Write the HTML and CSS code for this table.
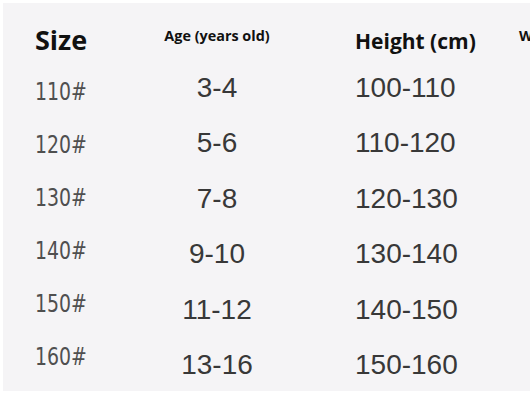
FILE: index.html
```html
<!DOCTYPE html>
<html lang="en">
<head>
    <meta charset="UTF-8">
    <meta name="viewport" content="width=device-width, initial-scale=1.0">
    <title>Size Chart</title>
    <link rel="stylesheet" href="styles.css">
</head>
<body>

<div class="sheet">
    <div class="col col-size">
        <div class="head head-size">Size</div>
        <ul class="list list-size">
            <li><span>110#</span></li>
            <li><span>120#</span></li>
            <li><span>130#</span></li>
            <li><span>140#</span></li>
            <li><span>150#</span></li>
            <li><span>160#</span></li>
        </ul>
    </div>
    <div class="col col-age">
        <div class="head head-small">Age (years old)</div>
        <ul class="list list-num">
            <li>3-4</li>
            <li>5-6</li>
            <li>7-8</li>
            <li>9-10</li>
            <li>11-12</li>
            <li>13-16</li>
        </ul>
    </div>
    <div class="col col-height">
        <div class="head head-height">Height (cm)</div>
        <ul class="list list-num">
            <li>100-110</li>
            <li>110-120</li>
            <li>120-130</li>
            <li>130-140</li>
            <li>140-150</li>
            <li>150-160</li>
        </ul>
    </div>
    <div class="col col-weight">
        <div class="head head-small">Weight (kg)</div>
    </div>
</div>

</body>
</html>
```

FILE: styles.css
```css
* {
    margin: 0;
    padding: 0;
    box-sizing: border-box;
}

body {
    background: #ffffff;
    overflow: hidden;
    width: 530px;
    height: 413px;
}

.sheet {
    display: flex;
    margin: 3px 0 0 3px;
    width: 600px;
    height: 388px;
    background: #f5f4f6;
}

.col {
    flex: none;
}

.col-size {
    width: 148px;
    padding-left: 32px;
}

.col-age {
    width: 132px;
    text-align: center;
}

.col-height {
    width: 236px;
    padding-left: 72px;
}

.col-weight {
    width: 100px;
}

.head {
    font-family: "Open Sans", "Noto Sans", sans-serif;
    font-weight: bold;
    color: #111;
    white-space: nowrap;
}

.head-size {
    height: 61.5px;
    padding-top: 20.5px;
    font-size: 27px;
    line-height: 32px;
}

.head-small {
    height: 56.6px;
    padding-top: 22.6px;
    font-size: 14.4px;
    line-height: 20px;
}

.head-height {
    height: 56.6px;
    padding-top: 23.8px;
    font-size: 21px;
    line-height: 28px;
}

.list {
    list-style: none;
}

.list-size li {
    height: 53px;
    font-family: "DejaVu Sans Condensed", "DejaVu Sans", sans-serif;
    font-stretch: condensed;
    font-size: 25px;
    line-height: 53px;
    color: #4f4f4f;
}

.list-size span {
    display: inline-block;
    transform: scaleX(0.84);
    transform-origin: left center;
}

.list-num li {
    height: 55.5px;
    font-family: "Liberation Sans", Arial, sans-serif;
    font-size: 28px;
    line-height: 55.5px;
    color: #383838;
}
```
